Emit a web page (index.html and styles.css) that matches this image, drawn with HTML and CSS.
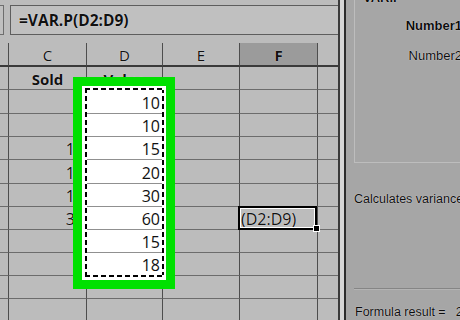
FILE: index.html
```html
<!DOCTYPE html>
<html lang="en">
<head>
<meta charset="utf-8">
<title>VAR.P</title>
<link rel="stylesheet" href="styles.css">
</head>
<body>
<div class="app">
  <div class="main">
    <div class="fbar">
      <div class="namebox"></div>
      <div class="formula">=VAR.P(D2:D9)</div>
    </div>
    <div class="sheet">
      <div class="c hd"></div><div class="c hd">C</div><div class="c hd">D</div><div class="c hd">E</div><div class="c hd sel">F</div><div class="c hd last"></div>

      <div class="c"></div><div class="c ctr b">Sold</div><div class="c ctr b">Value</div><div class="c"></div><div class="c"></div><div class="c last"></div>

      <div class="c"></div><div class="c num"></div><div class="c num w">10</div><div class="c"></div><div class="c"></div><div class="c last"></div>

      <div class="c"></div><div class="c num"></div><div class="c num w">10</div><div class="c"></div><div class="c"></div><div class="c last"></div>

      <div class="c"></div><div class="c num">12</div><div class="c num w">15</div><div class="c"></div><div class="c"></div><div class="c last"></div>

      <div class="c"></div><div class="c num">14</div><div class="c num w">20</div><div class="c"></div><div class="c"></div><div class="c last"></div>

      <div class="c"></div><div class="c num">16</div><div class="c num w">30</div><div class="c"></div><div class="c"></div><div class="c last"></div>

      <div class="c"></div><div class="c num">35</div><div class="c num w">60</div><div class="c"></div><div class="c active">(D2:D9)</div><div class="c last"></div>

      <div class="c"></div><div class="c num"></div><div class="c num w">15</div><div class="c"></div><div class="c"></div><div class="c last"></div>

      <div class="c"></div><div class="c num"></div><div class="c num w">18</div><div class="c"></div><div class="c"></div><div class="c last"></div>

      <div class="c"></div><div class="c"></div><div class="c"></div><div class="c"></div><div class="c"></div><div class="c last"></div>

      <div class="c"></div><div class="c"></div><div class="c"></div><div class="c"></div><div class="c"></div><div class="c last"></div>
    </div>
    <div class="highlight"></div>
    <div class="marquee"></div>
  </div>
  <div class="split"></div>
  <div class="panel">
    <div class="args">
      <div class="fn-name">VAR.P</div>
      <div class="arg req">Number1</div>
      <div class="arg">Number2</div>
    </div>
    <div class="desc">Calculates variance based on the entire population</div>
    <div class="rule"></div>
    <div class="result">Formula result =<span class="val">239.1875</span></div>
  </div>
</div>
</body>
</html>
```

FILE: styles.css
```css
* { box-sizing: border-box; margin: 0; padding: 0; }
html, body { width: 460px; height: 320px; overflow: hidden; }
body { background: #bcbcbc; font-family: "Open Sans", "Noto Sans", sans-serif; color: #111; }

.app { display: flex; height: 320px; }
.main { position: relative; width: 338px; flex: none; background: #bcbcbc; overflow: hidden; }

.fbar { display: flex; height: 43px; padding-top: 5px; gap: 6px; }
.namebox { width: 4px; height: 30px; border: 1px solid #6e6e6e; border-left: 0; background: #c0c0c0; }
.formula {
  flex: 1; height: 30px; border: 1px solid #5e5e5e; border-right: 0; background: #c0c0c0;
  font-weight: 700; font-size: 15.5px; line-height: 28px; padding: 0 0 0 8px;
  text-shadow: 0 0 1px rgba(255,255,255,.9);
}

.sheet {
  display: grid;
  grid-template-columns: 9px 78px 76px 77px 78px 20px;
  grid-template-rows: 24px 23px 24px 23px 23px 24px 23px 23px 23px 23px 23px 23px;
}
.c {
  display: flex; align-items: center; overflow: hidden; white-space: nowrap;
  border-right: 1px solid #4e4e4e; border-bottom: 1px solid #6c6c6c;
  font-size: 16px; line-height: 20px; padding-top: 2px; font-weight: 500;
  text-shadow: 0 0 1px rgba(255,255,255,.8);
}
.c.last { border-right: 0; }
.hd { justify-content: center; font-size: 15px; font-weight: 400; border-bottom: 2px solid #3a3a3a; }
.hd.sel { background: #9b9b9b; font-weight: 700; }
.ctr { justify-content: center; }
.b { font-weight: 700; font-size: 15px; }
.num { justify-content: flex-end; padding-right: 2px; }
.w { background: #fff; border-bottom-color: #909090; text-shadow: none; }

.active { position: relative; overflow: visible; padding-left: 1px; }
.active::before {
  content: ""; position: absolute; left: -2px; top: -1px; right: 0; bottom: -1px;
  border: 2px solid #000; box-shadow: inset 0 0 0 1px #fff;
}
.active::after {
  content: ""; position: absolute; right: -3px; bottom: -3px; width: 5px; height: 5px;
  background: #000; border: 1px solid #fff;
}

.highlight {
  position: absolute; left: 73px; top: 77px; width: 102px; height: 212px;
  border: 9px solid #00e100; box-shadow: inset 0 0 0 4px #fff;
}
.marquee {
  position: absolute; left: 85px; top: 88px; width: 79px; height: 189px;
  background:
    repeating-linear-gradient(90deg, #000 0 5px, #fff 5px 8px) top left / 100% 2px no-repeat,
    repeating-linear-gradient(90deg, #000 0 5px, #fff 5px 8px) bottom left / 100% 2px no-repeat,
    repeating-linear-gradient(180deg, #000 0 5px, #fff 5px 8px) top left / 2px 100% no-repeat,
    repeating-linear-gradient(180deg, #000 0 5px, #fff 5px 8px) top right / 2px 100% no-repeat;
}

.split {
  width: 8px; flex: none;
  background: linear-gradient(90deg, #3a3a3a 0 2px, #d6d6d6 2px 6px, #2c2c2c 6px 8px);
}
.panel {
  flex: 1; min-width: 0; background: #a6a6a6; padding-left: 8px; overflow: hidden;
  font-family: "Liberation Sans", Arial, sans-serif; font-size: 12.5px; color: #0d0d0d;
  text-shadow: 0 0 1px rgba(255,255,255,.9);
}
.args {
  height: 163px; border-left: 1px solid #bdbdbd; border-bottom: 1px solid #bdbdbd;
  display: grid; grid-template-columns: 107px; align-content: start;
}
.fn-name { margin-top: -10px; height: 15px; line-height: 15px; padding-left: 8px; font-weight: 700; font-size: 13px; }
.arg { justify-self: end; white-space: nowrap; font-size: 13px; line-height: 15px; margin-top: 13px; }
.arg + .arg { margin-top: 15px; }
.req { font-weight: 700; }
.desc { margin-top: 29px; line-height: 15px; white-space: nowrap; }
.rule { margin-top: 81px; height: 2px; border-top: 1px solid #858585; border-bottom: 1px solid #b4b4b4; }
.result { margin-top: 15px; line-height: 15px; white-space: nowrap; padding-left: 1px; }
.val { margin-left: 10px; }
```
